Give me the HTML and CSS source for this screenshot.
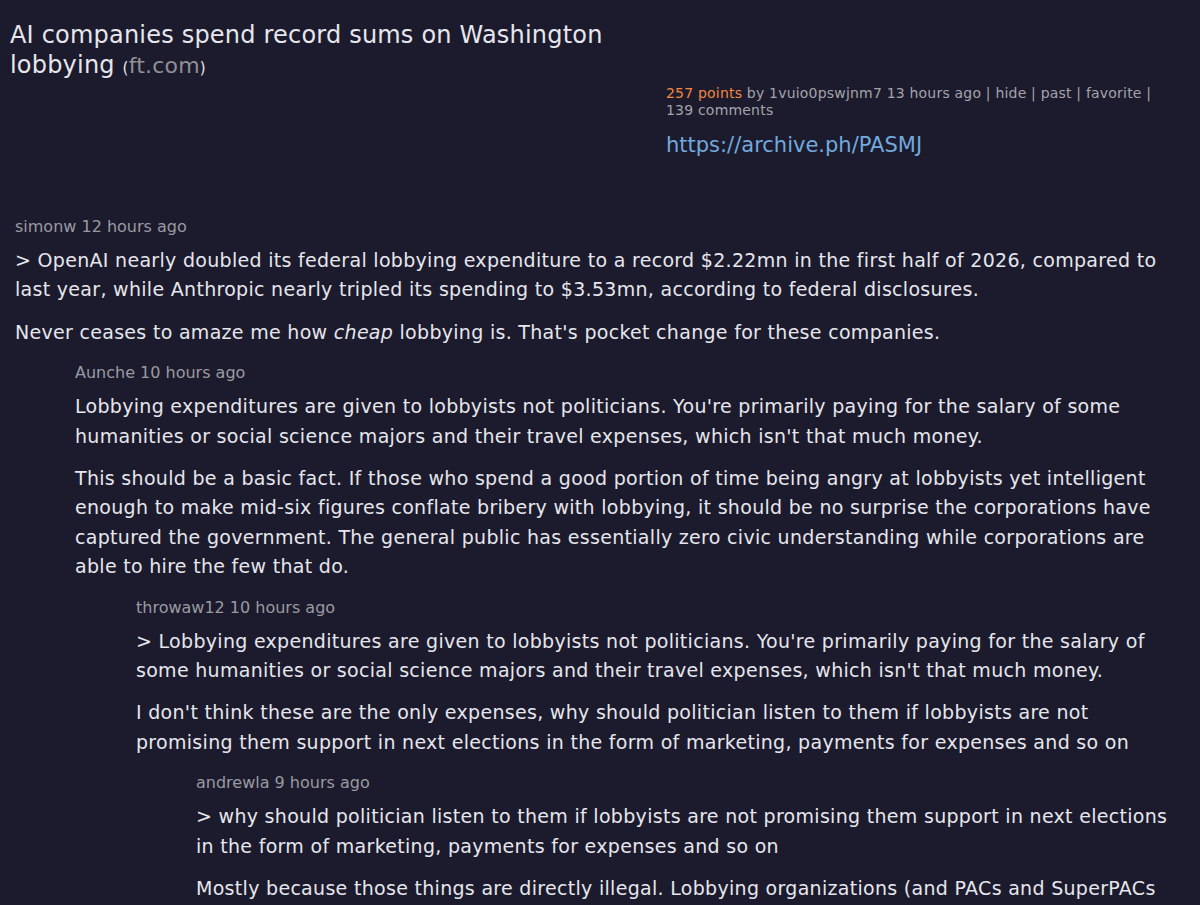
FILE: index.html
```html
<!DOCTYPE html>
<html lang="en">
<head>
  <meta charset="UTF-8" />
  <title>AI companies spend record sums on Washington lobbying</title>
  <link rel="stylesheet" href="styles.css">
</head>
<body>
  <!-- Story header -->
  <div class="story">
    <h1 class="story-title">AI companies spend record sums on Washington lobbying <span class="site">(<a href="#">ft.com</a>)</span></h1>
    <div class="story-side">
      <div class="story-meta">
        <span class="points">257 points</span> by 1vuio0pswjnm7 13 hours ago | hide | past | favorite | 139 comments
      </div>
      <a class="story-link" href="#">https://archive.ph/PASMJ</a>
    </div>
  </div>

  <!-- Comment thread -->
  <div class="thread">
    <div class="comment depth-0">
      <div class="comment-meta">simonw 12 hours ago</div>
      <div class="comment-body">
        <p>&gt; OpenAI nearly doubled its federal lobbying expenditure to a record $2.22mn in the first half of 2026, compared to last year, while Anthropic nearly tripled its spending to $3.53mn, according to federal disclosures.</p>
        <p>Never ceases to amaze me how <i>cheap</i> lobbying is. That's pocket change for these companies.</p>
      </div>
    </div>

    <div class="comment depth-1">
      <div class="comment-meta">Aunche 10 hours ago</div>
      <div class="comment-body">
        <p>Lobbying expenditures are given to lobbyists not politicians. You're primarily paying for the salary of some humanities or social science majors and their travel expenses, which isn't that much money.</p>
        <p>This should be a basic fact. If those who spend a good portion of time being angry at lobbyists yet intelligent enough to make mid-six figures conflate bribery with lobbying, it should be no surprise the corporations have captured the government. The general public has essentially zero civic understanding while corporations are able to hire the few that do.</p>
      </div>
    </div>

    <div class="comment depth-2">
      <div class="comment-meta">throwaw12 10 hours ago</div>
      <div class="comment-body">
        <p>&gt; Lobbying expenditures are given to lobbyists not politicians. You're primarily paying for the salary of some humanities or social science majors and their travel expenses, which isn't that much money.</p>
        <p>I don't think these are the only expenses, why should politician listen to them if lobbyists are not promising them support in next elections in the form of marketing, payments for expenses and so on</p>
      </div>
    </div>

    <div class="comment depth-3">
      <div class="comment-meta">andrewla 9 hours ago</div>
      <div class="comment-body">
        <p>&gt; why should politician listen to them if lobbyists are not promising them support in next elections in the form of marketing, payments for expenses and so on</p>
        <p>Mostly because those things are directly illegal. Lobbying organizations (and PACs and SuperPACs and other groups) are strictly limited in what they can do to support candidates.</p>
      </div>
    </div>
  </div>
</body>
</html>
```

FILE: styles.css
```css
* {
  margin: 0;
  padding: 0;
  box-sizing: border-box;
}
body {
  background-color: #1c1b2d;
  color: #e6e6ec;
  font-family: "DejaVu Sans", Verdana, sans-serif;
  padding: 20px 10px 0 10px;
}
a {
  color: inherit;
  text-decoration: none;
}
/* Story header */
.story {
  display: grid;
  grid-template-columns: 656px 1fr;
}
.story-title {
  font-size: 24px;
  font-weight: normal;
  line-height: 30px;
  letter-spacing: 0.2px;
  width: 630px;
}
.site {
  font-size: 15px;
  line-height: 1;
  color: #e6e6ec;
}
.site a {
  font-size: 22px;
  line-height: 1;
  color: #8f8f96;
}
.story-side {
  padding-top: 65px;
  max-width: 500px;
}
.story-meta {
  font-size: 14px;
  line-height: 17px;
  letter-spacing: 0.2px;
  color: #a3a3aa;
}
.points {
  color: #f0883e;
}
.story-link {
  display: block;
  margin-top: 14px;
  font-size: 21px;
  color: #72a9dd;
}
/* Thread */
.thread {
  margin-top: 60px;
}
.comment {
  margin-bottom: 16px;
  padding-left: 5px;
}
.depth-1 { padding-left: 65px; }
.depth-2 { padding-left: 126px; }
.depth-3 { padding-left: 186px; }
.comment-meta {
  font-size: 16px;
  line-height: 20px;
  color: #9a9aa1;
  margin-bottom: 9px;
}
.comment-body p {
  font-size: 19px;
  line-height: 29.4px;
  letter-spacing: 0.3px;
  margin-bottom: 13px;
}
```
